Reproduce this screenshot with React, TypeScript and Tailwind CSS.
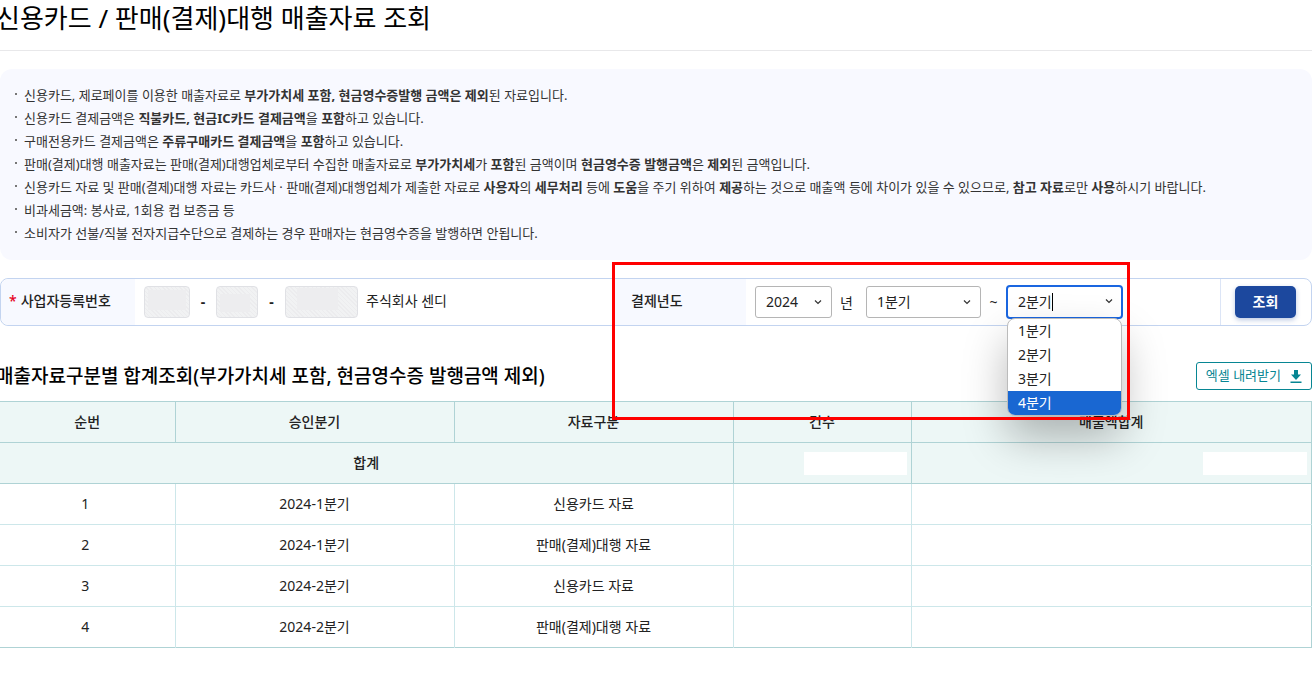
import React, { useState } from 'react';

const quarters = ['1분기', '2분기', '3분기', '4분기'];

const rows = [
  { quarter: '2024-1분기', type: '신용카드 자료' },
  { quarter: '2024-1분기', type: '판매(결제)대행 자료' },
  { quarter: '2024-2분기', type: '신용카드 자료' },
  { quarter: '2024-2분기', type: '판매(결제)대행 자료' },
];

function Chevron() {
  return (
    <svg
      className="pointer-events-none absolute right-2.5 top-3 h-2 w-2"
      viewBox="0 0 8 8"
      fill="none"
      stroke="#333"
      strokeWidth="1.2"
    >
      <path d="M1 2.5 4 5.5 7 2.5" />
    </svg>
  );
}

// Small registration number box, the value is hidden behind a plain mask
function MaskedInput({
  label,
  width,
  mask,
}: {
  label: string;
  width: string;
  mask: string;
}) {
  return (
    <span className={`relative block h-8 ${width}`}>
      <input
        aria-label={label}
        disabled
        className="block h-8 w-full rounded-[4px] border border-[#e0e1e5] bg-[repeating-linear-gradient(45deg,#ececee_0px,#ececee_1px,#f1f2f3_1px,#f1f2f3_3px)]"
      />
      <span className={`absolute bg-[#ededef] ${mask}`} />
    </span>
  );
}

function Notice({ children }: { children: React.ReactNode }) {
  return (
    <li className="flex">
      <span className="mr-[7px] mt-[9px] h-0.5 w-0.5 shrink-0 bg-[#777]" />
      <span>{children}</span>
    </li>
  );
}

function SearchBar() {
  const [year, setYear] = useState('2024');
  const [from, setFrom] = useState('1분기');
  const [to, setTo] = useState('2분기');
  const [active, setActive] = useState('4분기');

  return (
    <form
      onSubmit={(e) => e.preventDefault()}
      className="mt-[18px] flex h-12 rounded-lg border border-[#c3d4f0] text-sm"
    >
      {/* Business registration number */}
      <div className="flex w-[134px] shrink-0 items-center rounded-l-lg bg-[#f7f9ff] pb-0.5 pl-2 font-medium">
        <span className="mr-1 text-[#e60023]">*</span>사업자등록번호
      </div>
      <div className="flex flex-1 items-center pl-[9px]">
        <MaskedInput label="사업자등록번호 앞자리" width="w-[46px]" mask="left-1 right-1 top-1 bottom-2" />
        <span className="w-[26px] text-center font-bold">-</span>
        <MaskedInput label="사업자등록번호 가운데" width="w-[42px]" mask="left-1 right-2 top-2 bottom-1.5" />
        <span className="w-[27px] text-center font-bold">-</span>
        <MaskedInput label="사업자등록번호 뒷자리" width="w-[73px]" mask="left-3 right-5 top-0.5 bottom-2" />
        <span className="ml-2 pb-0.5">주식회사 센디</span>
      </div>

      {/* Payment period */}
      <div className="relative flex w-[607px] shrink-0 items-center">
        <div className="flex h-full w-[133px] items-center bg-[#f7f9ff] pb-0.5 pl-[18px] font-medium">
          결제년도
        </div>
        <div className="relative ml-[9px]">
          <select
            aria-label="결제년도"
            value={year}
            onChange={(e) => setYear(e.target.value)}
            className="block h-8 w-[77px] appearance-none rounded-[3px] border border-[#b5b5b5] bg-white pl-2.5"
          >
            <option>2024</option>
            <option>2023</option>
          </select>
          <Chevron />
        </div>
        <span className="ml-2 mt-0.5">년</span>
        <div className="relative ml-[13px]">
          <select
            aria-label="시작 분기"
            value={from}
            onChange={(e) => setFrom(e.target.value)}
            className="block h-8 w-[115px] appearance-none rounded-[3px] border border-[#b5b5b5] bg-white pl-2.5"
          >
            {quarters.map((q) => (
              <option key={q}>{q}</option>
            ))}
          </select>
          <Chevron />
        </div>
        <span className="w-[25px] text-center">~</span>
        <div className="relative">
          <select
            aria-label="종료 분기"
            value={to}
            onChange={(e) => setTo(e.target.value)}
            className="block h-[34px] w-[117px] appearance-none rounded-[4px] border-2 border-[#1a66e0] bg-white pl-2.5"
          >
            {quarters.map((q) => (
              <option key={q}>{q}</option>
            ))}
          </select>
          <Chevron />
          <span className="absolute left-[46px] top-2 h-[18px] w-px bg-black" />
          <ul
            role="listbox"
            aria-label="종료 분기 목록"
            className="absolute left-px top-[33px] z-10 w-[115px] overflow-hidden rounded-lg border border-[#bbb] bg-white shadow-[0_22px_44px_rgba(0,0,0,0.28)]"
          >
            {quarters.map((q) => (
              <li
                key={q}
                role="option"
                aria-selected={q === active}
                onMouseEnter={() => setActive(q)}
                onClick={() => setTo(q)}
                className={`h-6 pl-2.5 leading-6 ${q === active ? 'bg-[#1967d2] text-white' : ''}`}
              >
                {q}
              </li>
            ))}
          </ul>
        </div>
        <div className="pointer-events-none absolute -left-px -top-[17px] z-20 h-[158px] w-[518px] border-3 border-[#ff0000]" />
      </div>

      <div className="flex w-[91px] shrink-0 items-center border-l border-[#dce5f6] pl-3.5">
        <button
          type="submit"
          className="h-8 w-[61px] rounded-[5px] bg-[#1c489e] font-bold text-white shadow-[0_2px_5px_rgba(28,72,158,0.3)]"
        >
          조회
        </button>
      </div>
    </form>
  );
}

function SummaryTable() {
  return (
    <table className="mt-[11px] w-full table-fixed border-collapse border-y border-r border-[#afd3d5] text-center text-sm">
      <colgroup>
        <col className="w-[175px]" />
        <col className="w-[279px]" />
        <col className="w-[279px]" />
        <col className="w-[178px]" />
        <col />
      </colgroup>
      <thead className="bg-[#edf7f6]">
        <tr className="h-[41px]">
          {['순번', '승인분기', '자료구분', '건수', '매출액합계'].map((title) => (
            <th key={title} className="border-b border-r border-[#afd3d5] font-medium">
              {title}
            </th>
          ))}
        </tr>
        <tr className="h-[41px]">
          <th colSpan={3} className="border-b border-r border-[#afd3d5] font-medium">
            합계
          </th>
          <td className="border-b border-r border-[#afd3d5] pr-1">
            <div className="ml-auto h-[23px] w-[103px] bg-white" />
          </td>
          <td className="border-b border-r border-[#afd3d5] pr-1">
            <div className="ml-auto h-[23px] w-[104px] bg-white" />
          </td>
        </tr>
      </thead>
      <tbody>
        {rows.map((row, index) => (
          <tr key={index} className="h-[41px] border-b border-[#cde7ea] last:border-[#afd3d5]">
            <td className="border-r border-[#cde7ea] pr-1">{index + 1}</td>
            <td className="border-r border-[#cde7ea]">{row.quarter}</td>
            <td className="border-r border-[#cde7ea]">{row.type}</td>
            <td className="border-r border-[#cde7ea]" />
            <td />
          </tr>
        ))}
      </tbody>
    </table>
  );
}

export default function App() {
  return (
    <main className="mr-0.5 overflow-x-clip bg-white pb-6 font-['Noto_Sans','Noto_Sans_CJK_KR',sans-serif] text-[#222]">
      <h1 className="-ml-1 h-[51px] border-b border-[#e8e8ea] text-[26px] leading-9 text-black">
        신용카드 / 판매(결제)대행 매출자료 조회
      </h1>

      <ul className="mt-[18px] rounded-xl bg-[#f8f9ff] px-[15px] py-[15px] text-[13px] leading-[23px] text-[#333]">
        <Notice>
          신용카드, 제로페이를 이용한 매출자료로 <b>부가가치세 포함, 현금영수증발행 금액은 제외</b>된 자료입니다.
        </Notice>
        <Notice>
          신용카드 결제금액은 <b>직불카드, 현금IC카드 결제금액</b>을 <b>포함</b>하고 있습니다.
        </Notice>
        <Notice>
          구매전용카드 결제금액은 <b>주류구매카드 결제금액</b>을 <b>포함</b>하고 있습니다.
        </Notice>
        <Notice>
          판매(결제)대행 매출자료는 판매(결제)대행업체로부터 수집한 매출자료로 <b>부가가치세</b>가 <b>포함</b>된 금액이며{' '}
          <b>현금영수증 발행금액</b>은 <b>제외</b>된 금액입니다.
        </Notice>
        <Notice>
          신용카드 자료 및 판매(결제)대행 자료는 카드사 · 판매(결제)대행업체가 제출한 자료로 <b>사용자</b>의{' '}
          <b>세무처리</b> 등에 <b>도움</b>을 주기 위하여 <b>제공</b>하는 것으로 매출액 등에 차이가 있을 수 있으므로,{' '}
          <b>참고 자료</b>로만 <b>사용</b>하시기 바랍니다.
        </Notice>
        <Notice>비과세금액: 봉사료, 1회용 컵 보증금 등</Notice>
        <Notice>
          소비자가 선불/직불 전자지급수단으로 결제하는 경우 판매자는 현금영수증을 발행하면 안됩니다.
        </Notice>
      </ul>

      <SearchBar />

      <div className="mt-9 flex items-center justify-between">
        <h2 className="-ml-1 text-[19px] font-medium leading-7 text-black">
          매출자료구분별 합계조회(부가가치세 포함, 현금영수증 발행금액 제외)
        </h2>
        <button
          type="button"
          className="flex h-7 items-center gap-[9px] rounded-[3px] border border-[#078693] bg-white px-[9px] text-[13px] text-[#078693]"
        >
          엑셀 내려받기
          <svg className="h-[13px] w-3" viewBox="0 0 11 13" fill="currentColor">
            <path d="M3.5 0h4v4.5h3L5.5 10 .5 4.5h3zM0 11.5h11V13H0z" />
          </svg>
        </button>
      </div>

      <SummaryTable />
    </main>
  );
}
